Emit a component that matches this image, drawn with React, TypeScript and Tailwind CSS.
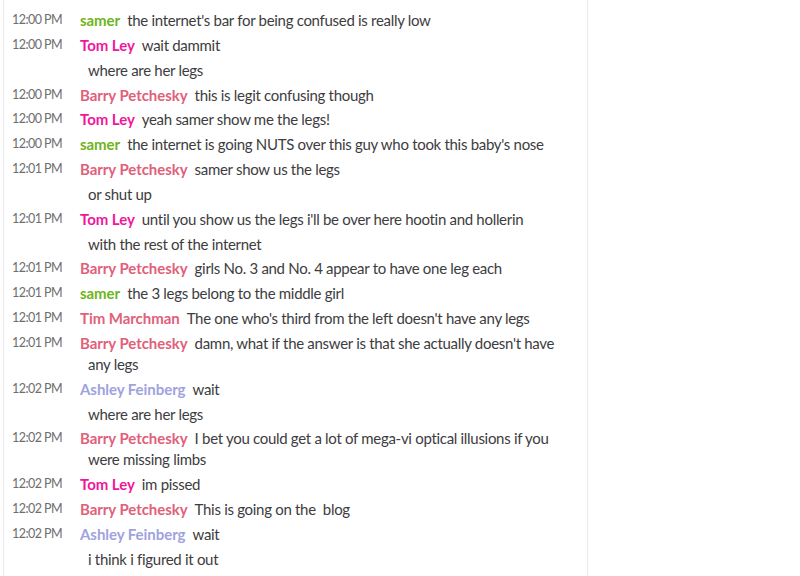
type Msg = {
  time?: string
  name?: string
  text: string
}

const colors: Record<string, string> = {
  samer: 'text-[#6db51b]',
  'Tom Ley': 'text-[#f0169c]',
  'Barry Petchesky': 'text-[#e1607a]',
  'Tim Marchman': 'text-[#e1607a]',
  'Ashley Feinberg': 'text-[#9ea2e0]',
}

const messages: Msg[] = [
  { time: '12:00 PM', name: 'samer', text: "the internet's bar for being confused is really low" },
  { time: '12:00 PM', name: 'Tom Ley', text: 'wait dammit' },
  { text: 'where are her legs' },
  { time: '12:00 PM', name: 'Barry Petchesky', text: 'this is legit confusing though' },
  { time: '12:00 PM', name: 'Tom Ley', text: 'yeah samer show me the legs!' },
  { time: '12:00 PM', name: 'samer', text: "the internet is going NUTS over this guy who took this baby's nose" },
  { time: '12:01 PM', name: 'Barry Petchesky', text: 'samer show us the legs' },
  { text: 'or shut up' },
  { time: '12:01 PM', name: 'Tom Ley', text: "until you show us the legs i'll be over here hootin and hollerin" },
  { text: 'with the rest of the internet' },
  { time: '12:01 PM', name: 'Barry Petchesky', text: 'girls No. 3 and No. 4 appear to have one leg each' },
  { time: '12:01 PM', name: 'samer', text: 'the 3 legs belong to the middle girl' },
  { time: '12:01 PM', name: 'Tim Marchman', text: "The one who's third from the left doesn't have any legs" },
  { time: '12:01 PM', name: 'Barry Petchesky', text: "damn, what if the answer is that she actually doesn't have any legs" },
  { time: '12:02 PM', name: 'Ashley Feinberg', text: 'wait' },
  { text: 'where are her legs' },
  { time: '12:02 PM', name: 'Barry Petchesky', text: 'I bet you could get a lot of mega-vi optical illusions if you were missing limbs' },
  { time: '12:02 PM', name: 'Tom Ley', text: 'im pissed' },
  { time: '12:02 PM', name: 'Barry Petchesky', text: 'This is going on the  blog' },
  { time: '12:02 PM', name: 'Ashley Feinberg', text: 'wait' },
  { text: 'i think i figured it out' },
]

export default function App() {
  return (
    <div className="flex min-h-screen bg-white font-['Lato','Liberation_Sans',sans-serif]">
      <div className="ml-[3px] min-h-screen w-[585px] border-x border-[#ebebeb] pt-[8px] pr-[16px]">
        {messages.map((m, i) => (
          <div key={i} className="flex py-[2px]">
            <div className="w-[76px] shrink-0 pl-[8px] text-[12.5px] leading-[20.85px] tracking-[-0.55px] text-[#6d6e70]">
              {m.time}
            </div>
            <div className="min-w-0 flex-1 pl-[8px] -indent-[8px] text-[15px] leading-[20.85px] tracking-[-0.3px] whitespace-pre-wrap text-[#3d3c40]">
              {m.name ? (
                <>
                  <span className={`mr-[7px] font-bold tracking-[-0.05px] ${colors[m.name]}`}>{m.name}</span>
                  {m.text}
                </>
              ) : (
                <span className="pl-[8px]">{m.text}</span>
              )}
            </div>
          </div>
        ))}
      </div>
    </div>
  )
}
